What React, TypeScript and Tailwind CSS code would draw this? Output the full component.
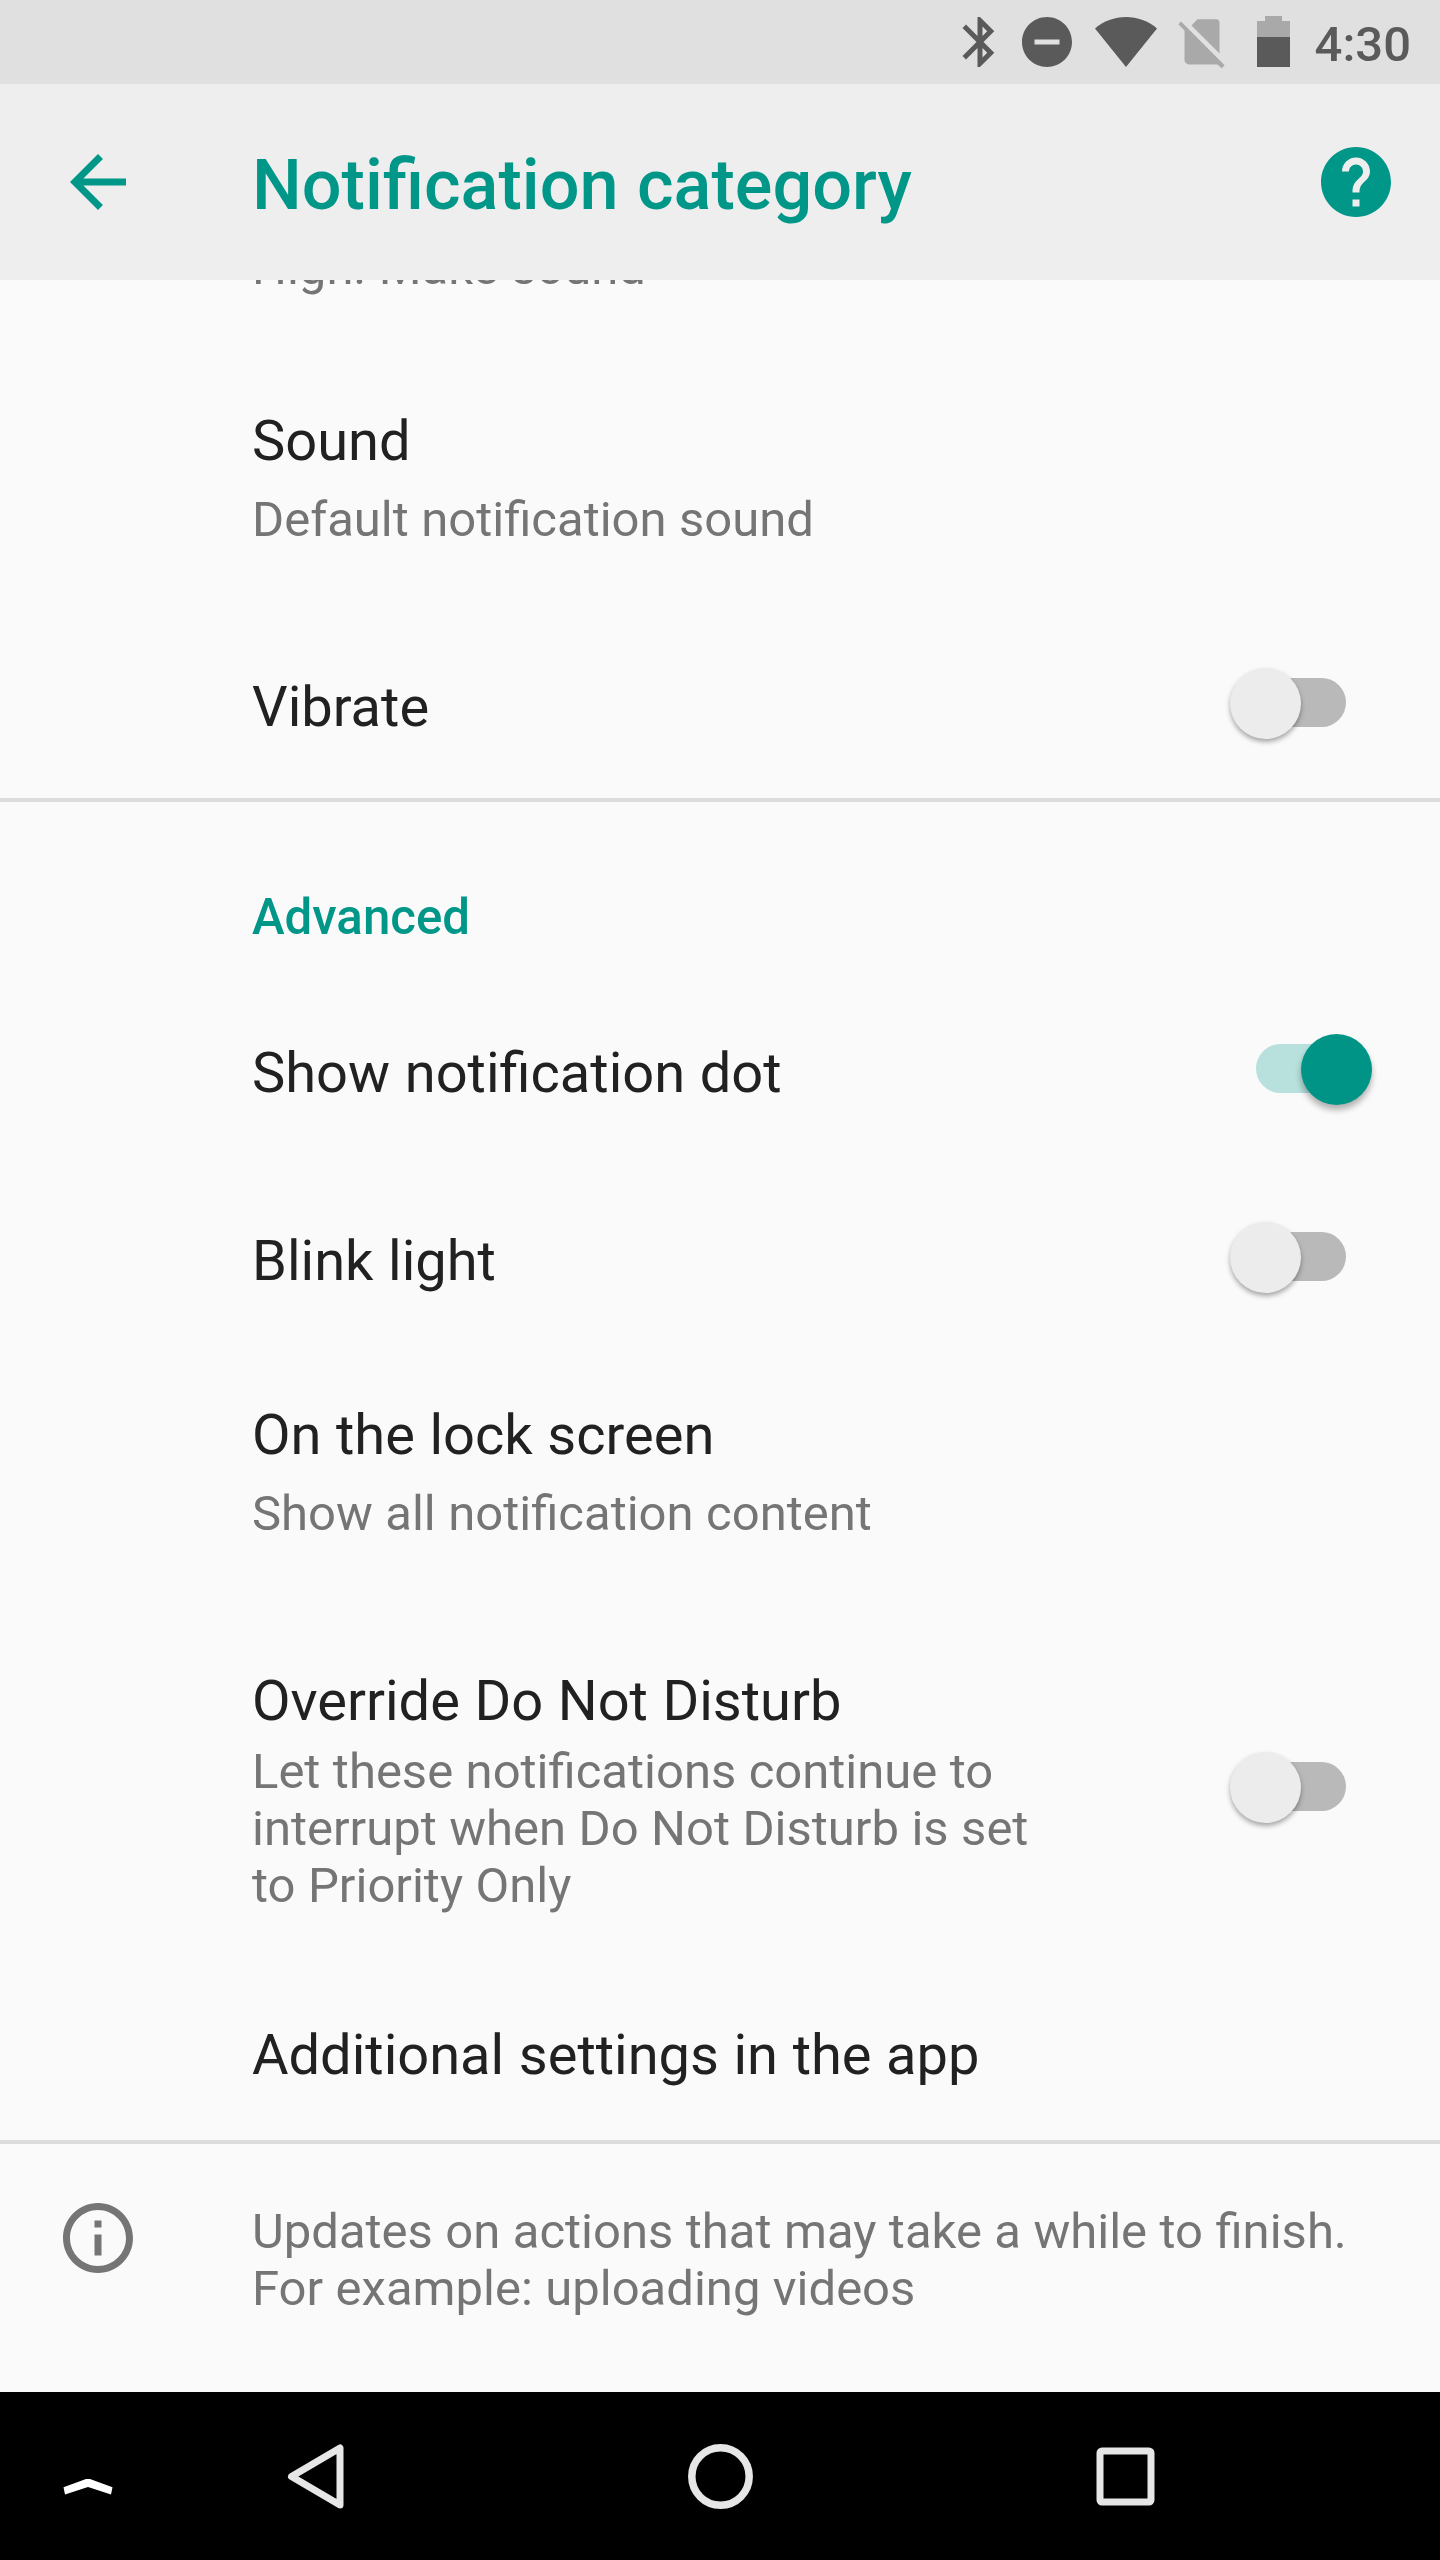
import type { ReactNode } from 'react';

function StatusBar() {
  return (
    <div className="flex h-[84px] items-start justify-end bg-[#e0e0e0] text-[#5a5a5a]">
      <svg className="mt-3 h-[60px] w-[60px]" viewBox="0 0 24 24" fill="currentColor">
        <path d="M17.71 7.71L12 2h-1v7.59L6.41 5 5 6.41 10.59 12 5 17.59 6.41 19 11 14.41V22h1l5.71-5.71-4.3-4.29 4.3-4.29zM13 5.83l1.88 1.88L13 9.59V5.83zm1.88 10.46L13 18.17v-3.76l1.88 1.88z" />
      </svg>
      <svg className="mt-3 ml-[7px] h-[60px] w-[60px]" viewBox="0 0 24 24" fill="currentColor">
        <path d="M12 2C6.48 2 2 6.48 2 12s4.48 10 10 10 10-4.48 10-10S17.52 2 12 2zm5 11H7v-2h10v2z" />
      </svg>
      <svg className="mt-[17px] ml-[18px] h-[50px] w-[62px]" viewBox="0 0 62 50" fill="currentColor">
        <path d="M31 50 0 11.5C8.5 4 19.5 0 31 0s22.5 4 31 11.5z" />
      </svg>
      <svg className="mt-[19px] ml-[21px] h-[50px] w-[48px]" viewBox="0 0 48 50" fill="#a9a9a9">
        <path d="M13.5 6.5 19.5 0.3H38a3.5 3.5 0 0 1 3.5 3.5V34.5z" />
        <path d="M3 2.6 46.6 46.3 43.8 49.2 39.5 45.4H11a4.5 4.5 0 0 1-4.5-4.5V11.5L0.3 5.3z" />
      </svg>
      <svg className="mt-4 ml-[31px] h-[51px] w-[33px]" viewBox="0 0 33 51">
        <path d="M8 0h17v5h8v16H0V5h8z" fill="#a9a9a9" />
        <path d="M0 21h33v30H0z" fill="currentColor" />
      </svg>
      <span className="mt-4 mr-[29px] ml-[25px] text-[49px] leading-[57px] font-medium">4:30</span>
    </div>
  );
}

function AppBar() {
  return (
    <header className="flex h-[196px] items-start bg-[#eeeeee] px-[42px] pt-14 text-[#009688]">
      <svg className="ml-3.5 h-[84px] w-[84px]" viewBox="0 0 24 24" fill="currentColor">
        <path d="M20 11H7.83l5.59-5.59L12 4l-8 8 8 8 1.41-1.41L7.83 13H20v-2z" />
      </svg>
      <h1 className="ml-28 flex-1 pt-1 text-[70.2px] leading-[82px] font-medium [word-spacing:1px]">
        Notification category
      </h1>
      <svg className="h-[84px] w-[84px]" viewBox="0 0 24 24" fill="currentColor">
        <path d="M12 2C6.48 2 2 6.48 2 12s4.48 10 10 10 10-4.48 10-10S17.52 2 12 2zm1 17h-2v-2h2v2zm2.07-7.75l-.9.92C13.45 12.9 13 13.5 13 15h-2v-.5c0-1.1.45-2.1 1.17-2.83l1.24-1.26c.37-.36.59-.86.59-1.41 0-1.1-.9-2-2-2s-2 .9-2 2H8c0-2.21 1.79-4 4-4s4 1.79 4 4c0 .88-.36 1.68-.93 2.25z" />
      </svg>
    </header>
  );
}

function Toggle({ on = false }: { on?: boolean }) {
  return (
    <div className="relative mb-[7px] flex h-[71px] w-[142px] items-start justify-center pt-2.5">
      <div className={on ? 'h-[49px] w-[90px] rounded-full bg-[#b8e0dc]' : 'h-[49px] w-[90px] rounded-full bg-[#b9b9b9]'} />
      <div
        className={
          on
            ? 'absolute top-0 right-0 h-[71px] w-[71px] rounded-full bg-[#009486] shadow-[0_5px_6px_rgba(0,0,0,0.3)]'
            : 'absolute top-0 left-0 h-[71px] w-[71px] rounded-full bg-[#ececec] shadow-[0_3px_5px_rgba(0,0,0,0.34)]'
        }
      />
    </div>
  );
}

type RowProps = {
  title: string;
  className: string;
  children?: ReactNode;
  toggle?: 'on' | 'off';
};

function Row({ title, className, children, toggle }: RowProps) {
  return (
    <div className={`flex justify-between pr-[68px] pl-[252px] ${className}`}>
      <div>
        <div className="text-[56px] leading-[66px] text-[#212121] [word-spacing:0.7px]">{title}</div>
        {children}
      </div>
      {toggle && <Toggle on={toggle === 'on'} />}
    </div>
  );
}

function NavBar() {
  return (
    <nav className="flex h-[168px] items-center bg-black">
      <svg className="ml-[46px] h-[84px] w-[84px]" viewBox="0 0 84 84" fill="#ffffff">
        <path d="M40 45h4L66.5 53.2 65 60.5 42 53 19 60.5 17.5 53.2z" />
      </svg>
      <svg className="ml-36 h-[84px] w-[84px]" viewBox="0 0 84 84" fill="none" stroke="#e6e6e6" strokeWidth="7" strokeLinejoin="round">
        <path d="M66 14v57L17.5 42.5z" />
      </svg>
      <svg className="ml-80 h-[84px] w-[84px]" viewBox="0 0 84 84" fill="none" stroke="#e6e6e6" strokeWidth="7.5">
        <circle cx="42.5" cy="42.5" r="28.7" />
      </svg>
      <svg className="ml-[322px] h-[84px] w-[84px]" viewBox="0 0 84 84" fill="none" stroke="#e6e6e6" strokeWidth="7">
        <rect x="16" y="17" width="51" height="51" rx="2" />
      </svg>
    </nav>
  );
}

export default function App() {
  return (
    <div className="flex h-[2560px] w-[1440px] flex-col overflow-hidden bg-[#fafafa] font-['Roboto',sans-serif]">
      <StatusBar />
      <AppBar />

      <main className="flex-1 text-[49px] leading-[57px] text-[#757575] [word-spacing:0.3px]">
        {/* summary of the importance row, scrolled under the app bar */}
        <div className="h-[60px] overflow-hidden pl-[252px]">
          <p className="-mt-[41px]">High. Make sound</p>
        </div>
        <Row title="Sound" className="h-[276px] items-center">
          <p className="mt-[17px]">Default notification sound</p>
        </Row>
        <Row title="Vibrate" className="h-[182px] items-center" toggle="off" />

        <div className="h-1 bg-[#dcdcdc]" />
        <h2 className="h-[177px] pt-[87px] pl-[252px] text-[49.2px] font-medium text-[#009688]">Advanced</h2>
        <Row title="Show notification dot" className="h-[188px] items-center" toggle="on" />
        <Row title="Blink light" className="h-[188px] items-center" toggle="off" />
        <Row title="On the lock screen" className="h-[234px] items-center">
          <p className="mt-[17px]">Show all notification content</p>
        </Row>
        <Row title="Override Do Not Disturb" className="h-[404px] items-center" toggle="off">
          <p className="mt-[9px] w-[800px]">
            Let these notifications continue to interrupt when Do Not Disturb is set to Priority Only
          </p>
        </Row>
        <Row title="Additional settings in the app" className="h-[147px] items-start pt-[29px]" />

        <div className="h-1 bg-[#dcdcdc]" />
        <div className="flex items-start pt-[52px] pl-14">
          <svg className="h-[84px] w-[84px]" viewBox="0 0 24 24" fill="currentColor">
            <path d="M11 17h2v-6h-2v6zm1-15C6.48 2 2 6.48 2 12s4.48 10 10 10 10-4.48 10-10S17.52 2 12 2zm0 18c-4.41 0-8-3.59-8-8s3.59-8 8-8 8 3.59 8 8-3.59 8-8 8zM11 9h2V7h-2v2z" />
          </svg>
          <p className="mt-[7px] ml-28 w-[1120px]">
            Updates on actions that may take a while to finish.
            <br />
            For example: uploading videos
          </p>
        </div>
      </main>

      <NavBar />
    </div>
  );
}
